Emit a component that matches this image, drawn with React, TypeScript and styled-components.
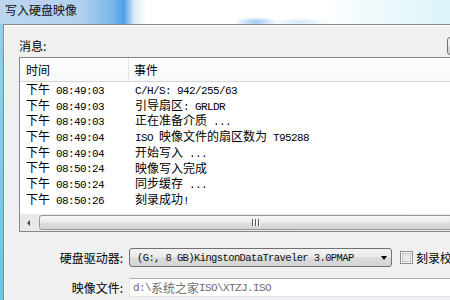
import React, { FC } from 'react';
import styled, { createGlobalStyle } from 'styled-components';

const CJK = '"Noto Sans CJK SC", "Noto Sans", sans-serif';
const MONO = '"Liberation Mono", "DejaVu Sans Mono", monospace';

const GlobalStyle = createGlobalStyle`
    html, body {
        margin: 0;
        padding: 0;
        width: 450px;
        height: 300px;
        overflow: hidden;
        background: #f0f0f0;
        font-family: ${CJK};
    }
`;

interface LogEntry {
    time: string;
    event: string;
}

const entries: LogEntry[] = [
    { time: '下午 08:49:03', event: 'C/H/S: 942/255/63' },
    { time: '下午 08:49:03', event: '引导扇区: GRLDR' },
    { time: '下午 08:49:03', event: '正在准备介质 ...' },
    { time: '下午 08:49:04', event: 'ISO 映像文件的扇区数为 T95288' },
    { time: '下午 08:49:04', event: '开始写入 ...' },
    { time: '下午 08:50:24', event: '映像写入完成' },
    { time: '下午 08:50:24', event: '同步缓存 ...' },
    { time: '下午 08:50:26', event: '刻录成功!' },
];

// ascii runs are drawn in the narrow mono face, like SimSun's half-width glyphs
const Mixed: FC<{ text: string }> = ({ text }) => (
    <>
        {text.split(/([\x00-\x7f]+)/).filter(Boolean).map((part, i) =>
            /^[\x00-\x7f]+$/.test(part)
                ? <Mono key={i}>{part}</Mono>
                : <span key={i}>{part}</span>
        )}
    </>
);

const App: FC = () => (
    <>
        <GlobalStyle />
        <Window>
            <TitleBar>写入硬盘映像</TitleBar>
            <Frame>
                <LeftEdge />
                <Client>
                    <SectionHeader>
                        <Caption>消息:</Caption>
                        <EdgeButton />
                    </SectionHeader>
                    <ListBox>
                        <HeaderRow>
                            <HeaderCell divider>时间</HeaderCell>
                            <HeaderCell>事件</HeaderCell>
                        </HeaderRow>
                        <Rows>
                            {entries.map((e, i) => (
                                <Row key={i}>
                                    <Cell><Mixed text={e.time} /></Cell>
                                    <Cell><Mixed text={e.event} /></Cell>
                                </Row>
                            ))}
                        </Rows>
                        <ScrollBar>
                            <ArrowButton><LeftArrow /></ArrowButton>
                            <Thumb>
                                <svg width="8" height="7" viewBox="0 0 8 7">
                                    <path d="M0.5 0v7M3.5 0v7M6.5 0v7" stroke="#5b5b5b" strokeWidth="1" />
                                    <path d="M1.5 0v7M4.5 0v7M7.5 0v7" stroke="#fafafa" strokeWidth="1" />
                                </svg>
                            </Thumb>
                        </ScrollBar>
                    </ListBox>
                    <Form>
                        <Label>硬盘驱动器:</Label>
                        <DriveRow>
                            <Combo>
                                <ComboText>(G:, 8 GB)KingstonDataTraveler 3.0PMAP</ComboText>
                                <DownArrow />
                            </Combo>
                            <CheckBox />
                            <CheckLabel>刻录校验</CheckLabel>
                        </DriveRow>
                        <Label>映像文件:</Label>
                        <TextField><Mixed text={'d:\\系统之家ISO\\XTZJ.ISO'} /></TextField>
                    </Form>
                </Client>
            </Frame>
        </Window>
    </>
);

export default App;

const Window = styled.div`
    width: 450px;
    height: 300px;
    display: flex;
    flex-direction: column;
    overflow: hidden;
`;

const TitleBar = styled.div`
    height: 24px;
    box-sizing: border-box;
    padding: 3px 0 0 5px;
    font-size: 12px;
    line-height: 14px;
    color: #101010;
    background:
        radial-gradient(ellipse 22px 5px at 256px 22px, rgba(70, 150, 235, 0.55), transparent),
        radial-gradient(ellipse 30px 4px at 300px 22px, rgba(120, 190, 240, 0.35), transparent),
        linear-gradient(90deg, #bcd6ee 0px, #b2d1ef 80px, #7ab8ec 112px, #4f9fe6 124px, #d6e9f8 134px, #ffffff 146px, #ffffff 320px, #eaf8fb 390px, #dcf4f8 450px);
`;

const Frame = styled.div`
    flex: 1;
    display: flex;
    min-height: 0;
`;

const LeftEdge = styled.div`
    width: 3px;
    background: linear-gradient(#8fd0ee, #6fc3e8);
`;

const Client = styled.div`
    flex: 1;
    min-width: 0;
    border-top: 1px solid #8a8a8a;
    border-left: 1px solid #8a8a8a;
    background: #f0f0f0;
    box-shadow: inset 1px 1px 0 #ffffff;
    padding: 12px 0 0 15px;
    overflow: hidden;
`;

const SectionHeader = styled.div`
    height: 18px;
    display: flex;
    align-items: center;
    margin-bottom: 2px;
`;

const Caption = styled.div`
    font-size: 12px;
    line-height: 14px;
    color: #000;
`;

const EdgeButton = styled.div`
    margin-left: auto;
    margin-right: -27px;
    width: 30px;
    height: 18px;
    box-sizing: border-box;
    border: 1px solid #707070;
    border-radius: 3px;
    background: linear-gradient(#f2f2f2, #ebebeb 50%, #dddddd 50%, #cfcfcf);
`;

const ListBox = styled.div`
    margin-right: -40px;
    border: 1px solid #828790;
    background: #ffffff;
`;

const HeaderRow = styled.div`
    display: grid;
    grid-template-columns: 109px 1fr;
    height: 23px;
    border-bottom: 1px solid #d5d5d5;
    background: linear-gradient(#ffffff, #f7f8f9);
`;

const HeaderCell = styled.div<{ divider?: boolean }>`
    display: flex;
    align-items: center;
    padding-left: ${p => (p.divider ? 6 : 5)}px;
    font-size: 12px;
    color: #000;
    border-right: ${p => (p.divider ? '1px solid #e5e5e5' : 'none')};
`;

const Rows = styled.div`
    height: 132px;
    overflow: hidden;
`;

const Row = styled.div`
    display: grid;
    grid-template-columns: 109px 1fr;
    height: 15.7px;
    align-items: center;
`;

const Cell = styled.div`
    padding-left: 6px;
    font-size: 12px;
    line-height: 14px;
    color: #000;
    white-space: nowrap;
`;

const Mono = styled.span`
    font-family: ${MONO};
    font-size: 11px;
    letter-spacing: -0.6px;
    white-space: pre;
`;

const ScrollBar = styled.div`
    display: flex;
    height: 17px;
    background: linear-gradient(90deg, #e8e8e8, #ededed);
`;

const ArrowButton = styled.div`
    width: 17px;
    display: flex;
    align-items: center;
    justify-content: center;
`;

const LeftArrow = styled.div`
    width: 0;
    height: 0;
    border-top: 3px solid transparent;
    border-bottom: 3px solid transparent;
    border-right: 3px solid #4a4a4a;
`;

const Thumb = styled.div`
    margin: 1px 0 1px 2px;
    width: 434px;
    flex: none;
    box-sizing: border-box;
    border: 1px solid #979797;
    border-radius: 3px;
    background: linear-gradient(#f5f5f5, #ececec 45%, #dedede 55%, #d2d2d2);
    display: flex;
    align-items: center;
    justify-content: center;
`;

const Form = styled.div`
    display: grid;
    grid-template-columns: 104px 1fr;
    column-gap: 6px;
    row-gap: 11px;
    align-items: center;
    margin: 16px -40px 0 0;
`;

const Label = styled.div`
    text-align: right;
    font-size: 12px;
    color: #000;
    white-space: nowrap;
`;

const DriveRow = styled.div`
    display: flex;
    align-items: center;
    white-space: nowrap;
`;

const Combo = styled.div`
    width: 263px;
    height: 19px;
    flex: none;
    box-sizing: border-box;
    border: 1px solid #707070;
    border-radius: 3px;
    background: linear-gradient(#f2f2f2, #ebebeb 50%, #dddddd 50%, #d3d3d3);
    display: flex;
    align-items: center;
    padding: 0 4px 0 7px;
`;

const ComboText = styled.span`
    flex: 1;
    font-family: ${MONO};
    font-size: 10.5px;
    letter-spacing: -0.6px;
    color: #111;
    white-space: pre;
    overflow: hidden;
`;

const DownArrow = styled.div`
    width: 0;
    height: 0;
    border-left: 3.5px solid transparent;
    border-right: 3.5px solid transparent;
    border-top: 4px solid #000;
`;

const CheckBox = styled.div`
    width: 13px;
    height: 13px;
    flex: none;
    margin-left: 8px;
    box-sizing: border-box;
    border: 1px solid #8e8f8f;
    background: #f4f4f4;
    box-shadow: inset 0 0 0 1px #f4f4f4, inset 0 0 0 2px #c7c7c7;
    background-image: linear-gradient(135deg, #dcdcdc, #f7f7f7);
`;

const CheckLabel = styled.span`
    margin-left: 3px;
    font-size: 12px;
    color: #000;
`;

const TextField = styled.div`
    height: 19px;
    box-sizing: border-box;
    border: 1px solid #e3e9ef;
    border-top-color: #abadb3;
    background: #ffffff;
    padding-left: 3px;
    display: flex;
    align-items: center;
    font-size: 12px;
    color: #6d6d6d;
    white-space: nowrap;
`;
